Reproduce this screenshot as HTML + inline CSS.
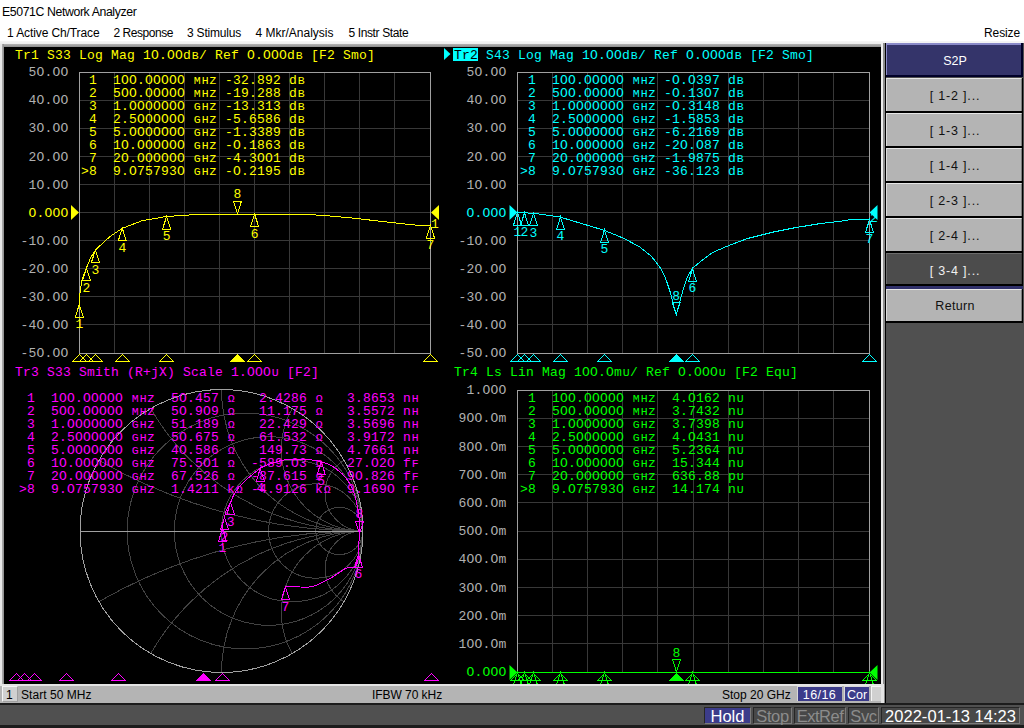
<!DOCTYPE html>
<html><head><meta charset="utf-8">
<style>
*{margin:0;padding:0;box-sizing:border-box}
html,body{width:1024px;height:728px;overflow:hidden;background:#fff;font-family:"Liberation Sans", sans-serif}
.abs{position:absolute}
.t{position:absolute;white-space:pre;line-height:1}
.sk{position:absolute;left:886px;width:136px;height:34px;background:#b4b4b4;border-top:1px solid #e8e8e8;border-left:1px solid #e0e0e0;border-bottom:2px solid #000;border-right:1px solid #404040;font-size:12px;color:#101010;text-align:center;line-height:31px}
</style></head><body>
<div class="t" style="left:2px;top:6px;font-size:12.3px;letter-spacing:-0.4px;color:#000">E5071C Network Analyzer</div>
<div class="t" style="left:7px;top:27px;font-size:12px;letter-spacing:-0.1px;color:#000">1 Active Ch/Trace</div>
<div class="t" style="left:113.5px;top:27px;font-size:12px;letter-spacing:-0.45px;color:#000">2 Response</div>
<div class="t" style="left:187px;top:27px;font-size:12px;letter-spacing:-0.2px;color:#000">3 Stimulus</div>
<div class="t" style="left:255.5px;top:27px;font-size:12px;letter-spacing:0px;color:#000">4 Mkr/Analysis</div>
<div class="t" style="left:348.5px;top:27px;font-size:12px;letter-spacing:-0.38px;color:#000">5 Instr State</div>
<div class="t" style="left:984px;top:27px;font-size:12px;letter-spacing:-0.1px;color:#000">Resize</div>
<!-- frame -->
<div class="abs" style="left:0;top:41px;width:886px;height:664px;background:#e8e8e8"></div>
<div class="abs" style="left:0;top:41px;width:886px;height:3px;background:linear-gradient(#f6f6f6,#ececec)"></div>
<div class="abs" style="left:2px;top:44px;width:879px;height:3px;background:linear-gradient(#b4b4b4,#8c8c8c)"></div>
<div class="abs" style="left:2px;top:44px;width:2px;height:640px;background:linear-gradient(90deg,#b0b0b0,#8c8c8c)"></div>
<div class="abs" style="left:881px;top:44px;width:2px;height:660px;background:#ececec"></div>
<div class="abs" style="left:883px;top:43px;width:2px;height:662px;background:#8c8c8c"></div>
<div class="abs" style="left:885px;top:43px;width:1px;height:662px;background:#000"></div>
<!-- softkeys panel -->
<div class="abs" style="left:886px;top:41px;width:138px;height:664px;background:#505050"></div>
<div class="abs" style="left:884px;top:41px;width:140px;height:2px;background:#f4f4f4"></div>
<div class="abs" style="left:886px;top:43px;width:137px;height:34px;background:#000028"></div>
<div class="abs" style="left:886px;top:43px;width:135px;height:32px;background:#34346a;border-top:2px solid #8a8ac8;border-left:1px solid #8a8ac8"></div>
<div class="t" style="left:887px;top:55px;width:136px;text-align:center;font-size:12.5px;color:#fff">S2P</div>
<div class="abs" style="left:886px;top:78px;width:137px;height:35px;background:#000"></div>
<div class="abs" style="left:886px;top:78px;width:136px;height:33px;background:#b4b4b4;border-top:1px solid #e6e6e6;border-left:1px solid #dcdcdc;border-right:1px solid #7c7c7c"></div>
<div class="t" style="left:887px;top:90px;width:136px;text-align:center;font-size:12.5px;letter-spacing:0.8px;color:#101010">[ 1-2 ]...</div>
<div class="abs" style="left:886px;top:113px;width:137px;height:35px;background:#000"></div>
<div class="abs" style="left:886px;top:113px;width:136px;height:33px;background:#b4b4b4;border-top:1px solid #e6e6e6;border-left:1px solid #dcdcdc;border-right:1px solid #7c7c7c"></div>
<div class="t" style="left:887px;top:125px;width:136px;text-align:center;font-size:12.5px;letter-spacing:0.8px;color:#101010">[ 1-3 ]...</div>
<div class="abs" style="left:886px;top:148px;width:137px;height:35px;background:#000"></div>
<div class="abs" style="left:886px;top:148px;width:136px;height:33px;background:#b4b4b4;border-top:1px solid #e6e6e6;border-left:1px solid #dcdcdc;border-right:1px solid #7c7c7c"></div>
<div class="t" style="left:887px;top:160px;width:136px;text-align:center;font-size:12.5px;letter-spacing:0.8px;color:#101010">[ 1-4 ]...</div>
<div class="abs" style="left:886px;top:183px;width:137px;height:35px;background:#000"></div>
<div class="abs" style="left:886px;top:183px;width:136px;height:33px;background:#b4b4b4;border-top:1px solid #e6e6e6;border-left:1px solid #dcdcdc;border-right:1px solid #7c7c7c"></div>
<div class="t" style="left:887px;top:195px;width:136px;text-align:center;font-size:12.5px;letter-spacing:0.8px;color:#101010">[ 2-3 ]...</div>
<div class="abs" style="left:886px;top:218px;width:137px;height:35px;background:#000"></div>
<div class="abs" style="left:886px;top:218px;width:136px;height:33px;background:#b4b4b4;border-top:1px solid #e6e6e6;border-left:1px solid #dcdcdc;border-right:1px solid #7c7c7c"></div>
<div class="t" style="left:887px;top:230px;width:136px;text-align:center;font-size:12.5px;letter-spacing:0.8px;color:#101010">[ 2-4 ]...</div>
<div class="abs" style="left:886px;top:253px;width:137px;height:37px;background:#000"></div>
<div class="abs" style="left:886px;top:253px;width:136px;height:31px;background:#4c4c4c;border-top:1px solid #6c6c6c;border-left:1px solid #6c6c6c;border-right:1px solid #3c3c3c"></div>
<div class="abs" style="left:886px;top:286px;width:137px;height:3px;background:#30306a"></div>
<div class="t" style="left:887px;top:265px;width:136px;text-align:center;font-size:12.5px;letter-spacing:0.8px;color:#f0f0f0">[ 3-4 ]...</div>
<div class="abs" style="left:886px;top:289px;width:137px;height:34px;background:#000"></div>
<div class="abs" style="left:886px;top:289px;width:136px;height:32px;background:#b4b4b4;border-top:1px solid #e6e6e6;border-left:1px solid #dcdcdc;border-right:1px solid #7c7c7c"></div>
<div class="t" style="left:887px;top:300px;width:136px;text-align:center;font-size:12.5px;letter-spacing:0.3px;color:#101010">Return</div>
<!-- display -->
<svg class="abs" style="left:0;top:0;white-space:pre" width="1024" height="728" viewBox="0 0 1024 728" font-family='"Liberation Mono", monospace'>
<rect x="4" y="47" width="877" height="637" fill="#000"/>
<text y="58.5" fill="#ffff00" font-size="13"><tspan x="15.00 23.00 31.00 39.00 47.00 55.00 63.00 71.00 79.00 87.00 95.00 103.00 111.00 119.00 127.00 135.00 143.00 151.00 159.00 167.00 175.00 183.00">Tr1 S33 Log Mag 1O.OOd</tspan><tspan x="191.70" font-size="11.5">B</tspan><tspan x="199.00 207.00 215.00 223.00 231.00 239.00 247.00 255.00 263.00 271.00 279.00 287.00">/ Ref O.OOOd</tspan><tspan x="295.70" font-size="11.5">B</tspan><tspan x="303.00 311.00 319.00 327.00 335.00 343.00 351.00 359.00 367.00"> [F2 Smo]</tspan></text>
<line x1="114.5" y1="72" x2="114.5" y2="353" stroke="#383838" stroke-width="1"/>
<line x1="149.5" y1="72" x2="149.5" y2="353" stroke="#383838" stroke-width="1"/>
<line x1="184.5" y1="72" x2="184.5" y2="353" stroke="#383838" stroke-width="1"/>
<line x1="219.5" y1="72" x2="219.5" y2="353" stroke="#383838" stroke-width="1"/>
<line x1="254.5" y1="72" x2="254.5" y2="353" stroke="#383838" stroke-width="1"/>
<line x1="289.5" y1="72" x2="289.5" y2="353" stroke="#383838" stroke-width="1"/>
<line x1="324.5" y1="72" x2="324.5" y2="353" stroke="#383838" stroke-width="1"/>
<line x1="359.5" y1="72" x2="359.5" y2="353" stroke="#383838" stroke-width="1"/>
<line x1="394.5" y1="72" x2="394.5" y2="353" stroke="#383838" stroke-width="1"/>
<line x1="79" y1="100.5" x2="430" y2="100.5" stroke="#383838" stroke-width="1"/>
<line x1="79" y1="128.5" x2="430" y2="128.5" stroke="#383838" stroke-width="1"/>
<line x1="79" y1="156.5" x2="430" y2="156.5" stroke="#383838" stroke-width="1"/>
<line x1="79" y1="184.5" x2="430" y2="184.5" stroke="#383838" stroke-width="1"/>
<line x1="79" y1="212.5" x2="430" y2="212.5" stroke="#383838" stroke-width="1"/>
<line x1="79" y1="240.5" x2="430" y2="240.5" stroke="#383838" stroke-width="1"/>
<line x1="79" y1="268.5" x2="430" y2="268.5" stroke="#383838" stroke-width="1"/>
<line x1="79" y1="296.5" x2="430" y2="296.5" stroke="#383838" stroke-width="1"/>
<line x1="79" y1="324.5" x2="430" y2="324.5" stroke="#383838" stroke-width="1"/>
<rect x="79.5" y="72.5" width="351" height="281" fill="none" stroke="#a0a0a0" stroke-width="1"/>
<text x="68.5" y="76.2" fill="#b0b0b0" font-size="13" letter-spacing="0.2" text-anchor="end">5O.OO</text>
<text x="68.5" y="104.3" fill="#b0b0b0" font-size="13" letter-spacing="0.2" text-anchor="end">4O.OO</text>
<text x="68.5" y="132.4" fill="#b0b0b0" font-size="13" letter-spacing="0.2" text-anchor="end">3O.OO</text>
<text x="68.5" y="160.5" fill="#b0b0b0" font-size="13" letter-spacing="0.2" text-anchor="end">2O.OO</text>
<text x="68.5" y="188.6" fill="#b0b0b0" font-size="13" letter-spacing="0.2" text-anchor="end">1O.OO</text>
<text x="68.5" y="216.7" fill="#ffff00" font-size="13" letter-spacing="0.2" text-anchor="end">O.OOO</text>
<text x="68.5" y="244.8" fill="#b0b0b0" font-size="13" letter-spacing="0.2" text-anchor="end">-1O.OO</text>
<text x="68.5" y="272.9" fill="#b0b0b0" font-size="13" letter-spacing="0.2" text-anchor="end">-2O.OO</text>
<text x="68.5" y="301.0" fill="#b0b0b0" font-size="13" letter-spacing="0.2" text-anchor="end">-3O.OO</text>
<text x="68.5" y="329.1" fill="#b0b0b0" font-size="13" letter-spacing="0.2" text-anchor="end">-4O.OO</text>
<text x="68.5" y="357.2" fill="#b0b0b0" font-size="13" letter-spacing="0.2" text-anchor="end">-5O.OO</text>
<text y="84" fill="#ffff00" font-size="13"><tspan x="81.00 89.00 97.00 105.00 113.00 121.00 129.00 137.00 145.00 153.00 161.00 169.00 177.00 185.00"> 1  1OO.OOOOO </tspan><tspan x="193.70 201.70" font-size="11.5">MH</tspan><tspan x="209.00 217.00 225.00 233.00 241.00 249.00 257.00 265.00 273.00 281.00 289.00">z -32.892 d</tspan><tspan x="297.70" font-size="11.5">B</tspan></text>
<text y="97" fill="#ffff00" font-size="13"><tspan x="81.00 89.00 97.00 105.00 113.00 121.00 129.00 137.00 145.00 153.00 161.00 169.00 177.00 185.00"> 2  5OO.OOOOO </tspan><tspan x="193.70 201.70" font-size="11.5">MH</tspan><tspan x="209.00 217.00 225.00 233.00 241.00 249.00 257.00 265.00 273.00 281.00 289.00">z -19.288 d</tspan><tspan x="297.70" font-size="11.5">B</tspan></text>
<text y="110" fill="#ffff00" font-size="13"><tspan x="81.00 89.00 97.00 105.00 113.00 121.00 129.00 137.00 145.00 153.00 161.00 169.00 177.00 185.00"> 3  1.OOOOOOO </tspan><tspan x="193.70 201.70" font-size="11.5">GH</tspan><tspan x="209.00 217.00 225.00 233.00 241.00 249.00 257.00 265.00 273.00 281.00 289.00">z -13.313 d</tspan><tspan x="297.70" font-size="11.5">B</tspan></text>
<text y="123" fill="#ffff00" font-size="13"><tspan x="81.00 89.00 97.00 105.00 113.00 121.00 129.00 137.00 145.00 153.00 161.00 169.00 177.00 185.00"> 4  2.5OOOOOO </tspan><tspan x="193.70 201.70" font-size="11.5">GH</tspan><tspan x="209.00 217.00 225.00 233.00 241.00 249.00 257.00 265.00 273.00 281.00 289.00">z -5.6586 d</tspan><tspan x="297.70" font-size="11.5">B</tspan></text>
<text y="136" fill="#ffff00" font-size="13"><tspan x="81.00 89.00 97.00 105.00 113.00 121.00 129.00 137.00 145.00 153.00 161.00 169.00 177.00 185.00"> 5  5.OOOOOOO </tspan><tspan x="193.70 201.70" font-size="11.5">GH</tspan><tspan x="209.00 217.00 225.00 233.00 241.00 249.00 257.00 265.00 273.00 281.00 289.00">z -1.3389 d</tspan><tspan x="297.70" font-size="11.5">B</tspan></text>
<text y="149" fill="#ffff00" font-size="13"><tspan x="81.00 89.00 97.00 105.00 113.00 121.00 129.00 137.00 145.00 153.00 161.00 169.00 177.00 185.00"> 6  1O.OOOOOO </tspan><tspan x="193.70 201.70" font-size="11.5">GH</tspan><tspan x="209.00 217.00 225.00 233.00 241.00 249.00 257.00 265.00 273.00 281.00 289.00">z -O.1863 d</tspan><tspan x="297.70" font-size="11.5">B</tspan></text>
<text y="162" fill="#ffff00" font-size="13"><tspan x="81.00 89.00 97.00 105.00 113.00 121.00 129.00 137.00 145.00 153.00 161.00 169.00 177.00 185.00"> 7  2O.OOOOOO </tspan><tspan x="193.70 201.70" font-size="11.5">GH</tspan><tspan x="209.00 217.00 225.00 233.00 241.00 249.00 257.00 265.00 273.00 281.00 289.00">z -4.3OO1 d</tspan><tspan x="297.70" font-size="11.5">B</tspan></text>
<text y="175" fill="#ffff00" font-size="13"><tspan x="81.00 89.00 97.00 105.00 113.00 121.00 129.00 137.00 145.00 153.00 161.00 169.00 177.00 185.00">&gt;8  9.O75793O </tspan><tspan x="193.70 201.70" font-size="11.5">GH</tspan><tspan x="209.00 217.00 225.00 233.00 241.00 249.00 257.00 265.00 273.00 281.00 289.00">z -O.2195 d</tspan><tspan x="297.70" font-size="11.5">B</tspan></text>
<polyline points="79.0,306.0 80.0,292.8 81.0,286.5 82.0,280.2 83.0,277.0 84.0,274.4 85.0,271.8 86.0,269.3 87.0,266.8 88.0,264.2 89.0,261.8 90.0,259.2 91.0,257.2 92.0,255.6 93.0,253.9 94.0,252.3 95.0,250.7 96.0,249.4 97.0,248.5 98.0,247.6 99.0,246.7 100.0,245.7 101.0,244.8 102.0,243.9 103.0,242.9 104.0,242.0 105.0,241.1 106.0,240.2 107.0,239.2 108.0,238.3 109.0,237.4 110.0,236.6 111.0,235.9 112.0,235.2 113.0,234.6 114.0,233.9 115.0,233.2 116.0,232.5 117.0,231.9 118.0,231.2 119.0,230.5 120.0,229.9 121.0,229.2 122.0,228.5 123.0,228.0 124.0,227.6 125.0,227.3 126.0,226.9 127.0,226.5 128.0,226.1 129.0,225.7 130.0,225.3 131.0,225.0 132.0,224.6 133.0,224.2 134.0,223.8 135.0,223.4 136.0,223.0 137.0,222.7 138.0,222.3 139.0,221.9 140.0,221.5 141.0,221.1 142.0,220.8 143.0,220.7 144.0,220.5 145.0,220.3 146.0,220.1 147.0,219.9 148.0,219.8 149.0,219.6 150.0,219.4 151.0,219.2 152.0,219.0 153.0,218.9 154.0,218.7 155.0,218.5 156.0,218.3 157.0,218.2 158.0,218.0 159.0,217.8 160.0,217.6 161.0,217.4 162.0,217.3 163.0,217.1 164.0,216.9 165.0,216.7 166.0,216.6 167.0,216.5 168.0,216.4 169.0,216.3 170.0,216.3 171.0,216.2 172.0,216.1 173.0,216.1 174.0,216.0 175.0,215.9 176.0,215.9 177.0,215.8 178.0,215.7 179.0,215.7 180.0,215.6 181.0,215.5 182.0,215.5 183.0,215.4 184.0,215.3 185.0,215.3 186.0,215.2 187.0,215.1 188.0,215.1 189.0,215.0 190.0,214.9 191.0,214.9 192.0,214.8 193.0,214.7 194.0,214.7 195.0,214.7 196.0,214.7 197.0,214.6 198.0,214.6 199.0,214.6 200.0,214.6 201.0,214.6 202.0,214.5 203.0,214.5 204.0,214.5 205.0,214.5 206.0,214.5 207.0,214.5 208.0,214.4 209.0,214.4 210.0,214.4 211.0,214.4 212.0,214.4 213.0,214.4 214.0,214.3 215.0,214.3 216.0,214.3 217.0,214.3 218.0,214.3 219.0,214.2 220.0,214.2 221.0,214.2 222.0,214.2 223.0,214.2 224.0,214.2 225.0,214.1 226.0,214.1 227.0,214.1 228.0,214.1 229.0,214.1 230.0,214.1 231.0,214.0 232.0,214.0 233.0,214.0 234.0,214.0 235.0,214.0 236.0,214.0 237.0,214.0 238.0,214.0 239.0,214.0 240.0,214.0 241.0,214.0 242.0,214.0 243.0,214.0 244.0,214.0 245.0,214.0 246.0,214.1 247.0,214.1 248.0,214.1 249.0,214.1 250.0,214.1 251.0,214.1 252.0,214.1 253.0,214.1 254.0,214.1 255.0,214.1 256.0,214.1 257.0,214.1 258.0,214.1 259.0,214.1 260.0,214.1 261.0,214.1 262.0,214.1 263.0,214.1 264.0,214.1 265.0,214.1 266.0,214.1 267.0,214.1 268.0,214.1 269.0,214.1 270.0,214.2 271.0,214.2 272.0,214.2 273.0,214.2 274.0,214.2 275.0,214.2 276.0,214.2 277.0,214.2 278.0,214.2 279.0,214.2 280.0,214.2 281.0,214.2 282.0,214.2 283.0,214.2 284.0,214.2 285.0,214.2 286.0,214.2 287.0,214.2 288.0,214.2 289.0,214.2 290.0,214.2 291.0,214.2 292.0,214.2 293.0,214.2 294.0,214.3 295.0,214.3 296.0,214.3 297.0,214.3 298.0,214.3 299.0,214.3 300.0,214.3 301.0,214.3 302.0,214.3 303.0,214.3 304.0,214.3 305.0,214.3 306.0,214.3 307.0,214.4 308.0,214.4 309.0,214.5 310.0,214.6 311.0,214.6 312.0,214.7 313.0,214.8 314.0,214.8 315.0,214.9 316.0,215.0 317.0,215.0 318.0,215.1 319.0,215.2 320.0,215.2 321.0,215.3 322.0,215.3 323.0,215.4 324.0,215.5 325.0,215.5 326.0,215.6 327.0,215.7 328.0,215.8 329.0,215.9 330.0,216.0 331.0,216.1 332.0,216.2 333.0,216.2 334.0,216.3 335.0,216.4 336.0,216.5 337.0,216.6 338.0,216.7 339.0,216.8 340.0,216.9 341.0,217.0 342.0,217.1 343.0,217.2 344.0,217.3 345.0,217.4 346.0,217.4 347.0,217.5 348.0,217.6 349.0,217.7 350.0,217.8 351.0,217.9 352.0,218.0 353.0,218.1 354.0,218.2 355.0,218.3 356.0,218.5 357.0,218.6 358.0,218.7 359.0,218.8 360.0,218.9 361.0,219.0 362.0,219.1 363.0,219.3 364.0,219.4 365.0,219.5 366.0,219.6 367.0,219.7 368.0,219.8 369.0,219.9 370.0,220.1 371.0,220.2 372.0,220.3 373.0,220.4 374.0,220.5 375.0,220.6 376.0,220.8 377.0,220.9 378.0,221.0 379.0,221.1 380.0,221.2 381.0,221.3 382.0,221.4 383.0,221.5 384.0,221.7 385.0,221.8 386.0,221.9 387.0,222.0 388.0,222.1 389.0,222.2 390.0,222.3 391.0,222.4 392.0,222.6 393.0,222.7 394.0,222.8 395.0,222.9 396.0,223.0 397.0,223.1 398.0,223.2 399.0,223.3 400.0,223.4 401.0,223.6 402.0,223.7 403.0,223.8 404.0,223.9 405.0,224.0 406.0,224.1 407.0,224.2 408.0,224.3 409.0,224.5 410.0,224.6 411.0,224.7 412.0,224.8 413.0,224.9 414.0,224.9 415.0,225.0 416.0,225.0 417.0,225.0 418.0,225.1 419.0,225.1 420.0,225.1 421.0,225.2 422.0,225.2 423.0,225.3 424.0,225.3 425.0,225.3 426.0,225.4 427.0,225.4 428.0,225.4 429.0,225.5 430.0,225.5" fill="none" stroke="#ffff00" stroke-width="1" shape-rendering="crispEdges"/>
<path d="M79.3,304.5 L75.3,317.0 L83.3,317.0 Z" fill="none" stroke="#ffff00" stroke-width="1" shape-rendering="crispEdges"/>
<text x="79.3" y="328.0" fill="#ffff00" font-size="13" letter-spacing="0" text-anchor="middle">1</text>
<path d="M86.5,268.0 L82.5,280.5 L90.5,280.5 Z" fill="none" stroke="#ffff00" stroke-width="1" shape-rendering="crispEdges"/>
<text x="86.5" y="291.5" fill="#ffff00" font-size="13" letter-spacing="0" text-anchor="middle">2</text>
<path d="M95.4,250.0 L91.4,262.5 L99.4,262.5 Z" fill="none" stroke="#ffff00" stroke-width="1" shape-rendering="crispEdges"/>
<text x="95.4" y="273.5" fill="#ffff00" font-size="13" letter-spacing="0" text-anchor="middle">3</text>
<path d="M122.3,228.3 L118.3,240.8 L126.3,240.8 Z" fill="none" stroke="#ffff00" stroke-width="1" shape-rendering="crispEdges"/>
<text x="122.3" y="251.8" fill="#ffff00" font-size="13" letter-spacing="0" text-anchor="middle">4</text>
<path d="M166.6,216.5 L162.6,229.0 L170.6,229.0 Z" fill="none" stroke="#ffff00" stroke-width="1" shape-rendering="crispEdges"/>
<text x="166.6" y="240.0" fill="#ffff00" font-size="13" letter-spacing="0" text-anchor="middle">5</text>
<path d="M254.6,214.0 L250.6,226.5 L258.6,226.5 Z" fill="none" stroke="#ffff00" stroke-width="1" shape-rendering="crispEdges"/>
<text x="254.6" y="237.5" fill="#ffff00" font-size="13" letter-spacing="0" text-anchor="middle">6</text>
<path d="M430.5,225.5 L426.5,238.0 L434.5,238.0 Z" fill="none" stroke="#ffff00" stroke-width="1" shape-rendering="crispEdges"/>
<text x="430.5" y="249.0" fill="#ffff00" font-size="13" letter-spacing="0" text-anchor="middle">7</text>
<path d="M237.5,213.5 L233.5,201.0 L241.5,201.0 Z" fill="none" stroke="#ffff00" stroke-width="1" shape-rendering="crispEdges"/>
<text x="237.5" y="198.0" fill="#ffff00" font-size="13" letter-spacing="0" text-anchor="middle">8</text>
<path d="M71,205.0 L79,212.5 L71,220.0 Z" fill="#ffff00"/>
<path d="M439,205.0 L431,212.5 L439,220.0 Z" fill="#ffff00"/>
<path d="M79.5,354.5 L72.5,361.5 L86.5,361.5 Z" fill="none" stroke="#ffff00" stroke-width="1" shape-rendering="crispEdges"/>
<path d="M86.5,354.5 L79.5,361.5 L93.5,361.5 Z" fill="none" stroke="#ffff00" stroke-width="1" shape-rendering="crispEdges"/>
<path d="M95.5,354.5 L88.5,361.5 L102.5,361.5 Z" fill="none" stroke="#ffff00" stroke-width="1" shape-rendering="crispEdges"/>
<path d="M122.5,354.5 L115.5,361.5 L129.5,361.5 Z" fill="none" stroke="#ffff00" stroke-width="1" shape-rendering="crispEdges"/>
<path d="M166.5,354.5 L159.5,361.5 L173.5,361.5 Z" fill="none" stroke="#ffff00" stroke-width="1" shape-rendering="crispEdges"/>
<path d="M254.5,354.5 L247.5,361.5 L261.5,361.5 Z" fill="none" stroke="#ffff00" stroke-width="1" shape-rendering="crispEdges"/>
<path d="M430.5,354.5 L423.5,361.5 L437.5,361.5 Z" fill="none" stroke="#ffff00" stroke-width="1" shape-rendering="crispEdges"/>
<path d="M237.5,354.5 L230.5,361.5 L244.5,361.5 Z" fill="#ffff00" stroke="#ffff00" stroke-width="1" shape-rendering="crispEdges"/>
<text x="435" y="228" fill="#ffff00" font-size="13" letter-spacing="0" text-anchor="middle">1</text>
<path d="M444,48 L450.5,54 L444,60 Z" fill="#00ffff"/>
<rect x="453" y="48" width="25" height="13" fill="#00ffff"/>
<text y="58.5" fill="#000000" font-size="13"><tspan x="454.00 462.00 470.00">Tr2</tspan></text>
<text y="58.5" fill="#00ffff" font-size="13"><tspan x="486.00 494.00 502.00 510.00 518.00 526.00 534.00 542.00 550.00 558.00 566.00 574.00 582.00 590.00 598.00 606.00 614.00 622.00">S43 Log Mag 1O.OOd</tspan><tspan x="630.70" font-size="11.5">B</tspan><tspan x="638.00 646.00 654.00 662.00 670.00 678.00 686.00 694.00 702.00 710.00 718.00 726.00">/ Ref O.OOOd</tspan><tspan x="734.70" font-size="11.5">B</tspan><tspan x="742.00 750.00 758.00 766.00 774.00 782.00 790.00 798.00 806.00"> [F2 Smo]</tspan></text>
<line x1="552.5" y1="72" x2="552.5" y2="353" stroke="#383838" stroke-width="1"/>
<line x1="587.5" y1="72" x2="587.5" y2="353" stroke="#383838" stroke-width="1"/>
<line x1="622.5" y1="72" x2="622.5" y2="353" stroke="#383838" stroke-width="1"/>
<line x1="657.5" y1="72" x2="657.5" y2="353" stroke="#383838" stroke-width="1"/>
<line x1="693.5" y1="72" x2="693.5" y2="353" stroke="#383838" stroke-width="1"/>
<line x1="728.5" y1="72" x2="728.5" y2="353" stroke="#383838" stroke-width="1"/>
<line x1="763.5" y1="72" x2="763.5" y2="353" stroke="#383838" stroke-width="1"/>
<line x1="798.5" y1="72" x2="798.5" y2="353" stroke="#383838" stroke-width="1"/>
<line x1="833.5" y1="72" x2="833.5" y2="353" stroke="#383838" stroke-width="1"/>
<line x1="517" y1="100.5" x2="869" y2="100.5" stroke="#383838" stroke-width="1"/>
<line x1="517" y1="128.5" x2="869" y2="128.5" stroke="#383838" stroke-width="1"/>
<line x1="517" y1="156.5" x2="869" y2="156.5" stroke="#383838" stroke-width="1"/>
<line x1="517" y1="184.5" x2="869" y2="184.5" stroke="#383838" stroke-width="1"/>
<line x1="517" y1="212.5" x2="869" y2="212.5" stroke="#383838" stroke-width="1"/>
<line x1="517" y1="240.5" x2="869" y2="240.5" stroke="#383838" stroke-width="1"/>
<line x1="517" y1="268.5" x2="869" y2="268.5" stroke="#383838" stroke-width="1"/>
<line x1="517" y1="296.5" x2="869" y2="296.5" stroke="#383838" stroke-width="1"/>
<line x1="517" y1="324.5" x2="869" y2="324.5" stroke="#383838" stroke-width="1"/>
<rect x="517.5" y="72.5" width="352" height="281" fill="none" stroke="#a0a0a0" stroke-width="1"/>
<text x="506.5" y="76.2" fill="#b0b0b0" font-size="13" letter-spacing="0.2" text-anchor="end">5O.OO</text>
<text x="506.5" y="104.3" fill="#b0b0b0" font-size="13" letter-spacing="0.2" text-anchor="end">4O.OO</text>
<text x="506.5" y="132.4" fill="#b0b0b0" font-size="13" letter-spacing="0.2" text-anchor="end">3O.OO</text>
<text x="506.5" y="160.5" fill="#b0b0b0" font-size="13" letter-spacing="0.2" text-anchor="end">2O.OO</text>
<text x="506.5" y="188.6" fill="#b0b0b0" font-size="13" letter-spacing="0.2" text-anchor="end">1O.OO</text>
<text x="506.5" y="216.7" fill="#00ffff" font-size="13" letter-spacing="0.2" text-anchor="end">O.OOO</text>
<text x="506.5" y="244.8" fill="#b0b0b0" font-size="13" letter-spacing="0.2" text-anchor="end">-1O.OO</text>
<text x="506.5" y="272.9" fill="#b0b0b0" font-size="13" letter-spacing="0.2" text-anchor="end">-2O.OO</text>
<text x="506.5" y="301.0" fill="#b0b0b0" font-size="13" letter-spacing="0.2" text-anchor="end">-3O.OO</text>
<text x="506.5" y="329.1" fill="#b0b0b0" font-size="13" letter-spacing="0.2" text-anchor="end">-4O.OO</text>
<text x="506.5" y="357.2" fill="#b0b0b0" font-size="13" letter-spacing="0.2" text-anchor="end">-5O.OO</text>
<text y="84" fill="#00ffff" font-size="13"><tspan x="520.00 528.00 536.00 544.00 552.00 560.00 568.00 576.00 584.00 592.00 600.00 608.00 616.00 624.00"> 1  1OO.OOOOO </tspan><tspan x="632.70 640.70" font-size="11.5">MH</tspan><tspan x="648.00 656.00 664.00 672.00 680.00 688.00 696.00 704.00 712.00 720.00 728.00">z -O.O397 d</tspan><tspan x="736.70" font-size="11.5">B</tspan></text>
<text y="97" fill="#00ffff" font-size="13"><tspan x="520.00 528.00 536.00 544.00 552.00 560.00 568.00 576.00 584.00 592.00 600.00 608.00 616.00 624.00"> 2  5OO.OOOOO </tspan><tspan x="632.70 640.70" font-size="11.5">MH</tspan><tspan x="648.00 656.00 664.00 672.00 680.00 688.00 696.00 704.00 712.00 720.00 728.00">z -O.13O7 d</tspan><tspan x="736.70" font-size="11.5">B</tspan></text>
<text y="110" fill="#00ffff" font-size="13"><tspan x="520.00 528.00 536.00 544.00 552.00 560.00 568.00 576.00 584.00 592.00 600.00 608.00 616.00 624.00"> 3  1.OOOOOOO </tspan><tspan x="632.70 640.70" font-size="11.5">GH</tspan><tspan x="648.00 656.00 664.00 672.00 680.00 688.00 696.00 704.00 712.00 720.00 728.00">z -O.3148 d</tspan><tspan x="736.70" font-size="11.5">B</tspan></text>
<text y="123" fill="#00ffff" font-size="13"><tspan x="520.00 528.00 536.00 544.00 552.00 560.00 568.00 576.00 584.00 592.00 600.00 608.00 616.00 624.00"> 4  2.5OOOOOO </tspan><tspan x="632.70 640.70" font-size="11.5">GH</tspan><tspan x="648.00 656.00 664.00 672.00 680.00 688.00 696.00 704.00 712.00 720.00 728.00">z -1.5853 d</tspan><tspan x="736.70" font-size="11.5">B</tspan></text>
<text y="136" fill="#00ffff" font-size="13"><tspan x="520.00 528.00 536.00 544.00 552.00 560.00 568.00 576.00 584.00 592.00 600.00 608.00 616.00 624.00"> 5  5.OOOOOOO </tspan><tspan x="632.70 640.70" font-size="11.5">GH</tspan><tspan x="648.00 656.00 664.00 672.00 680.00 688.00 696.00 704.00 712.00 720.00 728.00">z -6.2169 d</tspan><tspan x="736.70" font-size="11.5">B</tspan></text>
<text y="149" fill="#00ffff" font-size="13"><tspan x="520.00 528.00 536.00 544.00 552.00 560.00 568.00 576.00 584.00 592.00 600.00 608.00 616.00 624.00"> 6  1O.OOOOOO </tspan><tspan x="632.70 640.70" font-size="11.5">GH</tspan><tspan x="648.00 656.00 664.00 672.00 680.00 688.00 696.00 704.00 712.00 720.00 728.00">z -2O.O87 d</tspan><tspan x="736.70" font-size="11.5">B</tspan></text>
<text y="162" fill="#00ffff" font-size="13"><tspan x="520.00 528.00 536.00 544.00 552.00 560.00 568.00 576.00 584.00 592.00 600.00 608.00 616.00 624.00"> 7  2O.OOOOOO </tspan><tspan x="632.70 640.70" font-size="11.5">GH</tspan><tspan x="648.00 656.00 664.00 672.00 680.00 688.00 696.00 704.00 712.00 720.00 728.00">z -1.9875 d</tspan><tspan x="736.70" font-size="11.5">B</tspan></text>
<text y="175" fill="#00ffff" font-size="13"><tspan x="520.00 528.00 536.00 544.00 552.00 560.00 568.00 576.00 584.00 592.00 600.00 608.00 616.00 624.00">&gt;8  9.O75793O </tspan><tspan x="632.70 640.70" font-size="11.5">GH</tspan><tspan x="648.00 656.00 664.00 672.00 680.00 688.00 696.00 704.00 712.00 720.00 728.00">z -36.123 d</tspan><tspan x="736.70" font-size="11.5">B</tspan></text>
<polyline points="517.5,212.3 518.5,212.4 519.5,212.4 520.5,212.5 521.5,212.6 522.5,212.6 523.5,212.7 524.5,212.8 525.5,212.8 526.5,212.9 527.5,213.0 528.5,213.1 529.5,213.1 530.5,213.2 531.5,213.3 532.5,213.3 533.5,213.4 534.5,213.5 535.5,213.6 536.5,213.7 537.5,213.8 538.5,214.0 539.5,214.1 540.5,214.3 541.5,214.4 542.5,214.6 543.5,214.7 544.5,214.8 545.5,215.0 546.5,215.1 547.5,215.2 548.5,215.4 549.5,215.5 550.5,215.7 551.5,215.8 552.5,215.9 553.5,216.1 554.5,216.2 555.5,216.4 556.5,216.5 557.5,216.7 558.5,216.8 559.5,216.9 560.5,217.2 561.5,217.5 562.5,217.8 563.5,218.1 564.5,218.4 565.5,218.7 566.5,219.0 567.5,219.3 568.5,219.6 569.5,219.9 570.5,220.2 571.5,220.5 572.5,220.8 573.5,221.1 574.5,221.4 575.5,221.7 576.5,222.0 577.5,222.3 578.5,222.6 579.5,222.9 580.5,223.2 581.5,223.5 582.5,223.8 583.5,224.1 584.5,224.4 585.5,224.7 586.5,225.0 587.5,225.3 588.5,225.6 589.5,225.9 590.5,226.2 591.5,226.5 592.5,226.8 593.5,227.1 594.5,227.4 595.5,227.7 596.5,228.0 597.5,228.3 598.5,228.6 599.5,228.9 600.5,229.2 601.5,229.5 602.5,229.8 603.5,230.1 604.5,230.5 605.5,230.9 606.5,231.3 607.5,231.7 608.5,232.1 609.5,232.5 610.5,232.9 611.5,233.3 612.5,233.7 613.5,234.1 614.5,234.5 615.5,234.9 616.5,235.3 617.5,235.7 618.5,236.1 619.5,236.6 620.5,237.0 621.5,237.4 622.5,237.8 623.5,238.3 624.5,238.8 625.5,239.3 626.5,239.9 627.5,240.4 628.5,240.9 629.5,241.5 630.5,242.0 631.5,242.5 632.5,243.0 633.5,243.6 634.5,244.1 635.5,244.6 636.5,245.2 637.5,245.7 638.5,246.2 639.5,246.8 640.5,247.6 641.5,248.4 642.5,249.2 643.5,250.0 644.5,250.8 645.5,251.6 646.5,252.4 647.5,253.2 648.5,254.0 649.5,254.8 650.5,255.6 651.5,256.4 652.5,257.7 653.5,259.0 654.5,260.2 655.5,261.5 656.5,262.8 657.5,264.1 658.5,265.3 659.5,266.6 660.5,268.3 661.5,270.3 662.5,272.3 663.5,274.3 664.5,276.3 665.5,278.3 666.5,280.9 667.5,283.9 668.5,287.0 669.5,290.0 670.5,293.0 671.5,296.7 672.5,300.7 673.5,304.6 674.5,308.5 675.5,312.5 676.5,314.1 677.5,310.4 678.5,306.7 679.5,303.0 680.5,299.3 681.5,295.6 682.5,291.9 683.5,288.8 684.5,285.8 685.5,282.7 686.5,279.7 687.5,276.7 688.5,275.0 689.5,273.3 690.5,271.6 691.5,269.9 692.5,268.4 693.5,267.6 694.5,266.7 695.5,265.8 696.5,264.9 697.5,264.1 698.5,263.2 699.5,262.3 700.5,261.5 701.5,260.8 702.5,260.0 703.5,259.2 704.5,258.5 705.5,257.7 706.5,256.9 707.5,256.2 708.5,255.4 709.5,254.6 710.5,253.9 711.5,253.1 712.5,252.5 713.5,252.1 714.5,251.6 715.5,251.2 716.5,250.8 717.5,250.4 718.5,249.9 719.5,249.5 720.5,249.1 721.5,248.7 722.5,248.2 723.5,247.8 724.5,247.4 725.5,246.9 726.5,246.5 727.5,246.1 728.5,245.7 729.5,245.3 730.5,244.9 731.5,244.5 732.5,244.2 733.5,243.8 734.5,243.4 735.5,243.0 736.5,242.7 737.5,242.3 738.5,241.9 739.5,241.5 740.5,241.2 741.5,240.8 742.5,240.4 743.5,240.0 744.5,239.7 745.5,239.3 746.5,238.9 747.5,238.5 748.5,238.2 749.5,238.0 750.5,237.7 751.5,237.5 752.5,237.2 753.5,237.0 754.5,236.7 755.5,236.5 756.5,236.2 757.5,236.0 758.5,235.7 759.5,235.5 760.5,235.2 761.5,235.0 762.5,234.7 763.5,234.5 764.5,234.2 765.5,234.0 766.5,233.7 767.5,233.5 768.5,233.2 769.5,233.0 770.5,232.7 771.5,232.5 772.5,232.2 773.5,232.0 774.5,231.8 775.5,231.6 776.5,231.4 777.5,231.2 778.5,231.0 779.5,230.8 780.5,230.6 781.5,230.4 782.5,230.2 783.5,230.0 784.5,229.8 785.5,229.6 786.5,229.4 787.5,229.2 788.5,229.0 789.5,228.8 790.5,228.6 791.5,228.4 792.5,228.2 793.5,228.0 794.5,227.8 795.5,227.6 796.5,227.5 797.5,227.3 798.5,227.1 799.5,227.0 800.5,226.8 801.5,226.6 802.5,226.5 803.5,226.3 804.5,226.2 805.5,226.0 806.5,225.8 807.5,225.7 808.5,225.5 809.5,225.3 810.5,225.2 811.5,225.0 812.5,224.9 813.5,224.7 814.5,224.5 815.5,224.4 816.5,224.2 817.5,224.0 818.5,223.9 819.5,223.7 820.5,223.6 821.5,223.4 822.5,223.3 823.5,223.2 824.5,223.1 825.5,223.0 826.5,222.9 827.5,222.8 828.5,222.6 829.5,222.5 830.5,222.4 831.5,222.3 832.5,222.2 833.5,222.1 834.5,221.9 835.5,221.8 836.5,221.7 837.5,221.6 838.5,221.5 839.5,221.4 840.5,221.2 841.5,221.1 842.5,221.0 843.5,220.9 844.5,220.8 845.5,220.7 846.5,220.5 847.5,220.2 848.5,219.9 849.5,219.8 850.5,219.8 851.5,219.8 852.5,219.8 853.5,219.8 854.5,219.8 855.5,219.8 856.5,219.8 857.5,219.8 858.5,219.8 859.5,219.8 860.5,219.8 861.5,219.8 862.5,219.8 863.5,219.8 864.5,219.8 865.5,219.8 866.5,219.8 867.5,219.8 868.5,219.8 869.5,219.8" fill="none" stroke="#00ffff" stroke-width="1" shape-rendering="crispEdges"/>
<path d="M517.5,212.6 L513.5,225.1 L521.5,225.1 Z" fill="none" stroke="#00ffff" stroke-width="1" shape-rendering="crispEdges"/>
<text x="517.5" y="236.111557" fill="#00ffff" font-size="13" letter-spacing="0" text-anchor="middle">1</text>
<path d="M524.5,212.9 L520.5,225.4 L528.5,225.4 Z" fill="none" stroke="#00ffff" stroke-width="1" shape-rendering="crispEdges"/>
<text x="524.5" y="236.367267" fill="#00ffff" font-size="13" letter-spacing="0" text-anchor="middle">2</text>
<path d="M533.5,213.4 L529.5,225.9 L537.5,225.9 Z" fill="none" stroke="#00ffff" stroke-width="1" shape-rendering="crispEdges"/>
<text x="533.5" y="236.884588" fill="#00ffff" font-size="13" letter-spacing="0" text-anchor="middle">3</text>
<path d="M560.5,217.0 L556.5,229.5 L564.5,229.5 Z" fill="none" stroke="#00ffff" stroke-width="1" shape-rendering="crispEdges"/>
<text x="560.5" y="240.454693" fill="#00ffff" font-size="13" letter-spacing="0" text-anchor="middle">4</text>
<path d="M604.5,230.0 L600.5,242.5 L608.5,242.5 Z" fill="none" stroke="#00ffff" stroke-width="1" shape-rendering="crispEdges"/>
<text x="604.5" y="253.469489" fill="#00ffff" font-size="13" letter-spacing="0" text-anchor="middle">5</text>
<path d="M692.5,268.9 L688.5,281.4 L696.5,281.4 Z" fill="none" stroke="#00ffff" stroke-width="1" shape-rendering="crispEdges"/>
<text x="692.5" y="292.44447" fill="#00ffff" font-size="13" letter-spacing="0" text-anchor="middle">6</text>
<path d="M869.5,219.8 L865.5,232.3 L873.5,232.3 Z" fill="none" stroke="#00ffff" stroke-width="1" shape-rendering="crispEdges"/>
<text x="869.5" y="243.3" fill="#00ffff" font-size="13" letter-spacing="0" text-anchor="middle">7</text>
<path d="M676.2,315.0 L672.2,302.5 L680.2,302.5 Z" fill="none" stroke="#00ffff" stroke-width="1" shape-rendering="crispEdges"/>
<text x="676.2" y="299.5" fill="#00ffff" font-size="13" letter-spacing="0" text-anchor="middle">8</text>
<text x="874" y="222" fill="#00ffff" font-size="13" letter-spacing="0" text-anchor="middle">2</text>
<path d="M509.5,205.0 L517.5,212.5 L509.5,220.0 Z" fill="#00ffff"/>
<path d="M877.5,205.0 L869.5,212.5 L877.5,220.0 Z" fill="#00ffff"/>
<path d="M517.5,354.5 L510.5,361.5 L524.5,361.5 Z" fill="none" stroke="#00ffff" stroke-width="1" shape-rendering="crispEdges"/>
<path d="M524.5,354.5 L517.5,361.5 L531.5,361.5 Z" fill="none" stroke="#00ffff" stroke-width="1" shape-rendering="crispEdges"/>
<path d="M533.5,354.5 L526.5,361.5 L540.5,361.5 Z" fill="none" stroke="#00ffff" stroke-width="1" shape-rendering="crispEdges"/>
<path d="M560.5,354.5 L553.5,361.5 L567.5,361.5 Z" fill="none" stroke="#00ffff" stroke-width="1" shape-rendering="crispEdges"/>
<path d="M604.5,354.5 L597.5,361.5 L611.5,361.5 Z" fill="none" stroke="#00ffff" stroke-width="1" shape-rendering="crispEdges"/>
<path d="M692.5,354.5 L685.5,361.5 L699.5,361.5 Z" fill="none" stroke="#00ffff" stroke-width="1" shape-rendering="crispEdges"/>
<path d="M869.5,354.5 L862.5,361.5 L876.5,361.5 Z" fill="none" stroke="#00ffff" stroke-width="1" shape-rendering="crispEdges"/>
<path d="M676.5,354.5 L669.5,361.5 L683.5,361.5 Z" fill="#00ffff" stroke="#00ffff" stroke-width="1" shape-rendering="crispEdges"/>
<text y="376" fill="#ff00ff" font-size="13"><tspan x="15.00 23.00 31.00 39.00 47.00 55.00 63.00 71.00 79.00 87.00 95.00 103.00 111.00 119.00 127.00 135.00 143.00 151.00 159.00 167.00 175.00 183.00 191.00 199.00 207.00 215.00 223.00 231.00 239.00 247.00 255.00 263.00">Tr3 S33 Smith (R+jX) Scale 1.OOO</tspan><tspan x="271.70" font-size="11.5">U</tspan><tspan x="279.00 287.00 295.00 303.00 311.00"> [F2]</tspan></text>
<defs><clipPath id="smc"><circle cx="221.5" cy="531" r="141.5"/></clipPath></defs>
<g clip-path="url(#smc)" fill="none" stroke="#424242" stroke-width="1" shape-rendering="crispEdges"><circle cx="245.08" cy="531" r="117.92"/><circle cx="268.67" cy="531" r="94.33"/><circle cx="292.25" cy="531" r="70.75"/><circle cx="315.83" cy="531" r="47.17"/><circle cx="339.42" cy="531" r="23.58"/><circle cx="363.00" cy="2.91" r="528.09"/><circle cx="363.00" cy="1059.09" r="528.09"/><circle cx="363.00" cy="285.91" r="245.09"/><circle cx="363.00" cy="776.09" r="245.09"/><circle cx="363.00" cy="389.50" r="141.50"/><circle cx="363.00" cy="672.50" r="141.50"/><circle cx="363.00" cy="449.30" r="81.70"/><circle cx="363.00" cy="612.70" r="81.70"/><circle cx="363.00" cy="493.09" r="37.91"/><circle cx="363.00" cy="568.91" r="37.91"/></g>
<circle cx="221.5" cy="531" r="141.5" fill="none" stroke="#a0a0a0" stroke-width="1" shape-rendering="crispEdges"/>
<line x1="80.0" y1="531.5" x2="363.0" y2="531.5" stroke="#a0a0a0" stroke-width="1"/>
<polyline points="222.2,532.0 222.2,531.5 222.3,530.8 222.4,529.8 222.5,528.7 222.6,527.2 222.8,525.4 223.0,523.6 223.2,522.0 223.5,520.7 223.8,519.6 224.1,518.5 224.5,517.2 224.9,515.6 225.3,513.8 225.8,511.9 226.5,510.0 227.4,508.2 228.4,506.4 229.5,504.5 230.6,502.4 231.6,500.1 232.6,497.5 233.8,494.9 235.3,492.2 237.2,489.6 239.3,486.9 241.8,484.1 244.7,481.2 248.2,478.0 252.2,474.6 256.4,471.3 260.3,468.5 263.9,466.5 267.5,464.9 270.9,463.6 274.4,462.5 277.8,461.4 281.2,460.6 284.7,459.9 288.4,459.4 292.5,459.1 296.9,459.1 301.3,459.2 305.6,459.4 309.7,459.7 313.7,460.2 317.6,460.8 321.2,461.7 324.6,462.8 327.8,464.0 330.8,465.5 333.8,467.2 336.7,469.2 339.5,471.5 342.2,473.9 344.7,476.6 347.0,479.5 349.0,482.6 350.9,485.8 352.5,489.0 353.8,492.1 354.8,495.2 355.6,498.3 356.4,501.6 357.1,505.0 357.8,508.4 358.3,512.0 358.8,515.6 359.1,519.5 359.3,523.7 359.4,527.7 359.5,531.2 359.5,534.0 359.3,536.2 359.2,538.4 359.0,541.0 358.9,544.3 358.8,548.0 358.7,551.6 358.5,554.7 358.3,557.0 358.2,558.9 357.9,560.5 357.5,562.0 357.0,563.6 356.5,565.0 355.7,566.3 354.6,567.2 353.0,567.6 351.0,567.6 348.9,567.6 346.9,567.9 345.2,568.6 343.5,569.6 341.9,570.7 340.3,571.8 338.7,572.9 337.0,574.0 335.4,575.1 333.7,576.2 332.1,577.2 330.5,578.1 328.8,579.1 327.1,580.0 325.3,581.0 323.4,582.0 321.4,582.9 319.5,583.8 317.6,584.6 315.7,585.4 313.8,586.1 311.8,586.6 309.7,586.9 307.6,587.1 305.4,587.1 303.0,587.1 300.3,587.0 297.4,586.9 294.5,586.7 292.0,586.6 289.9,586.7 288.0,586.8 286.5,587.0 285.4,587.1" fill="none" stroke="#ff00ff" stroke-width="1" shape-rendering="crispEdges"/>
<path d="M222.5,528.7 L218.5,541.2 L226.5,541.2 Z" fill="none" stroke="#ff00ff" stroke-width="1" shape-rendering="crispEdges"/>
<text x="222.5" y="552.2" fill="#ff00ff" font-size="13" letter-spacing="0" text-anchor="middle">1</text>
<path d="M224.5,517.2 L220.5,529.7 L228.5,529.7 Z" fill="none" stroke="#ff00ff" stroke-width="1" shape-rendering="crispEdges"/>
<text x="224.5" y="540.7" fill="#ff00ff" font-size="13" letter-spacing="0" text-anchor="middle">2</text>
<path d="M230.6,502.4 L226.6,514.9 L234.6,514.9 Z" fill="none" stroke="#ff00ff" stroke-width="1" shape-rendering="crispEdges"/>
<text x="230.6" y="525.9" fill="#ff00ff" font-size="13" letter-spacing="0" text-anchor="middle">3</text>
<path d="M260.3,468.5 L256.3,481.0 L264.3,481.0 Z" fill="none" stroke="#ff00ff" stroke-width="1" shape-rendering="crispEdges"/>
<text x="260.3" y="492.0" fill="#ff00ff" font-size="13" letter-spacing="0" text-anchor="middle">4</text>
<path d="M321.2,461.7 L317.2,474.2 L325.2,474.2 Z" fill="none" stroke="#ff00ff" stroke-width="1" shape-rendering="crispEdges"/>
<text x="321.25" y="485.2" fill="#ff00ff" font-size="13" letter-spacing="0" text-anchor="middle">5</text>
<path d="M358.5,554.7 L354.5,567.2 L362.5,567.2 Z" fill="none" stroke="#ff00ff" stroke-width="1" shape-rendering="crispEdges"/>
<text x="358.5" y="578.2" fill="#ff00ff" font-size="13" letter-spacing="0" text-anchor="middle">6</text>
<path d="M285.4,587.1 L281.4,599.6 L289.4,599.6 Z" fill="none" stroke="#ff00ff" stroke-width="1" shape-rendering="crispEdges"/>
<text x="285.4" y="610.6" fill="#ff00ff" font-size="13" letter-spacing="0" text-anchor="middle">7</text>
<path d="M359.5,533.5 L355.5,521.0 L363.5,521.0 Z" fill="none" stroke="#ff00ff" stroke-width="1" shape-rendering="crispEdges"/>
<text x="359.5" y="518.0" fill="#ff00ff" font-size="13" letter-spacing="0" text-anchor="middle">8</text>
<text y="402" fill="#ff00ff" font-size="13"><tspan x="19.00 27.00 35.00 43.00 51.00 59.00 67.00 75.00 83.00 91.00 99.00 107.00 115.00 123.00"> 1  1OO.OOOOO </tspan><tspan x="131.70 139.70" font-size="11.5">MH</tspan><tspan x="147.00 155.00 163.00 171.00 179.00 187.00 195.00 203.00 211.00 219.00">z  5O.457 </tspan><tspan x="227.70" font-size="11.5">Ω</tspan><tspan x="235.00 243.00 251.00 259.00 267.00 275.00 283.00 291.00 299.00 307.00">   2.4286 </tspan><tspan x="315.70" font-size="11.5">Ω</tspan><tspan x="323.00 331.00 339.00 347.00 355.00 363.00 371.00 379.00 387.00 395.00 403.00">   3.8653 n</tspan><tspan x="411.70" font-size="11.5">H</tspan></text>
<text y="415" fill="#ff00ff" font-size="13"><tspan x="19.00 27.00 35.00 43.00 51.00 59.00 67.00 75.00 83.00 91.00 99.00 107.00 115.00 123.00"> 2  5OO.OOOOO </tspan><tspan x="131.70 139.70" font-size="11.5">MH</tspan><tspan x="147.00 155.00 163.00 171.00 179.00 187.00 195.00 203.00 211.00 219.00">z  5O.9O9 </tspan><tspan x="227.70" font-size="11.5">Ω</tspan><tspan x="235.00 243.00 251.00 259.00 267.00 275.00 283.00 291.00 299.00 307.00">   11.175 </tspan><tspan x="315.70" font-size="11.5">Ω</tspan><tspan x="323.00 331.00 339.00 347.00 355.00 363.00 371.00 379.00 387.00 395.00 403.00">   3.5572 n</tspan><tspan x="411.70" font-size="11.5">H</tspan></text>
<text y="428" fill="#ff00ff" font-size="13"><tspan x="19.00 27.00 35.00 43.00 51.00 59.00 67.00 75.00 83.00 91.00 99.00 107.00 115.00 123.00"> 3  1.OOOOOOO </tspan><tspan x="131.70 139.70" font-size="11.5">GH</tspan><tspan x="147.00 155.00 163.00 171.00 179.00 187.00 195.00 203.00 211.00 219.00">z  51.189 </tspan><tspan x="227.70" font-size="11.5">Ω</tspan><tspan x="235.00 243.00 251.00 259.00 267.00 275.00 283.00 291.00 299.00 307.00">   22.429 </tspan><tspan x="315.70" font-size="11.5">Ω</tspan><tspan x="323.00 331.00 339.00 347.00 355.00 363.00 371.00 379.00 387.00 395.00 403.00">   3.5696 n</tspan><tspan x="411.70" font-size="11.5">H</tspan></text>
<text y="441" fill="#ff00ff" font-size="13"><tspan x="19.00 27.00 35.00 43.00 51.00 59.00 67.00 75.00 83.00 91.00 99.00 107.00 115.00 123.00"> 4  2.5OOOOOO </tspan><tspan x="131.70 139.70" font-size="11.5">GH</tspan><tspan x="147.00 155.00 163.00 171.00 179.00 187.00 195.00 203.00 211.00 219.00">z  5O.675 </tspan><tspan x="227.70" font-size="11.5">Ω</tspan><tspan x="235.00 243.00 251.00 259.00 267.00 275.00 283.00 291.00 299.00 307.00">   61.532 </tspan><tspan x="315.70" font-size="11.5">Ω</tspan><tspan x="323.00 331.00 339.00 347.00 355.00 363.00 371.00 379.00 387.00 395.00 403.00">   3.9172 n</tspan><tspan x="411.70" font-size="11.5">H</tspan></text>
<text y="454" fill="#ff00ff" font-size="13"><tspan x="19.00 27.00 35.00 43.00 51.00 59.00 67.00 75.00 83.00 91.00 99.00 107.00 115.00 123.00"> 5  5.OOOOOOO </tspan><tspan x="131.70 139.70" font-size="11.5">GH</tspan><tspan x="147.00 155.00 163.00 171.00 179.00 187.00 195.00 203.00 211.00 219.00">z  4O.586 </tspan><tspan x="227.70" font-size="11.5">Ω</tspan><tspan x="235.00 243.00 251.00 259.00 267.00 275.00 283.00 291.00 299.00 307.00">   149.73 </tspan><tspan x="315.70" font-size="11.5">Ω</tspan><tspan x="323.00 331.00 339.00 347.00 355.00 363.00 371.00 379.00 387.00 395.00 403.00">   4.7661 n</tspan><tspan x="411.70" font-size="11.5">H</tspan></text>
<text y="467" fill="#ff00ff" font-size="13"><tspan x="19.00 27.00 35.00 43.00 51.00 59.00 67.00 75.00 83.00 91.00 99.00 107.00 115.00 123.00"> 6  1O.OOOOOO </tspan><tspan x="131.70 139.70" font-size="11.5">GH</tspan><tspan x="147.00 155.00 163.00 171.00 179.00 187.00 195.00 203.00 211.00 219.00">z  75.5O1 </tspan><tspan x="227.70" font-size="11.5">Ω</tspan><tspan x="235.00 243.00 251.00 259.00 267.00 275.00 283.00 291.00 299.00 307.00">  -589.O3 </tspan><tspan x="315.70" font-size="11.5">Ω</tspan><tspan x="323.00 331.00 339.00 347.00 355.00 363.00 371.00 379.00 387.00 395.00 403.00">   27.O2O f</tspan><tspan x="411.70" font-size="11.5">F</tspan></text>
<text y="480" fill="#ff00ff" font-size="13"><tspan x="19.00 27.00 35.00 43.00 51.00 59.00 67.00 75.00 83.00 91.00 99.00 107.00 115.00 123.00"> 7  2O.OOOOOO </tspan><tspan x="131.70 139.70" font-size="11.5">GH</tspan><tspan x="147.00 155.00 163.00 171.00 179.00 187.00 195.00 203.00 211.00 219.00">z  67.526 </tspan><tspan x="227.70" font-size="11.5">Ω</tspan><tspan x="235.00 243.00 251.00 259.00 267.00 275.00 283.00 291.00 299.00 307.00">  -87.615 </tspan><tspan x="315.70" font-size="11.5">Ω</tspan><tspan x="323.00 331.00 339.00 347.00 355.00 363.00 371.00 379.00 387.00 395.00 403.00">   9O.826 f</tspan><tspan x="411.70" font-size="11.5">F</tspan></text>
<text y="493" fill="#ff00ff" font-size="13"><tspan x="19.00 27.00 35.00 43.00 51.00 59.00 67.00 75.00 83.00 91.00 99.00 107.00 115.00 123.00">&gt;8  9.O75793O </tspan><tspan x="131.70 139.70" font-size="11.5">GH</tspan><tspan x="147.00 155.00 163.00 171.00 179.00 187.00 195.00 203.00 211.00 219.00 227.00">z  1.4211 k</tspan><tspan x="235.70" font-size="11.5">Ω</tspan><tspan x="243.00 251.00 259.00 267.00 275.00 283.00 291.00 299.00 307.00 315.00"> -4.9126 k</tspan><tspan x="323.70" font-size="11.5">Ω</tspan><tspan x="331.00 339.00 347.00 355.00 363.00 371.00 379.00 387.00 395.00 403.00">  9.169O f</tspan><tspan x="411.70" font-size="11.5">F</tspan></text>
<path d="M16.5,673.5 L9.5,680.5 L23.5,680.5 Z" fill="none" stroke="#ff00ff" stroke-width="1" shape-rendering="crispEdges"/>
<path d="M24.5,673.5 L17.5,680.5 L31.5,680.5 Z" fill="none" stroke="#ff00ff" stroke-width="1" shape-rendering="crispEdges"/>
<path d="M34.5,673.5 L27.5,680.5 L41.5,680.5 Z" fill="none" stroke="#ff00ff" stroke-width="1" shape-rendering="crispEdges"/>
<path d="M66.5,673.5 L59.5,680.5 L73.5,680.5 Z" fill="none" stroke="#ff00ff" stroke-width="1" shape-rendering="crispEdges"/>
<path d="M118.5,673.5 L111.5,680.5 L125.5,680.5 Z" fill="none" stroke="#ff00ff" stroke-width="1" shape-rendering="crispEdges"/>
<path d="M222.5,673.5 L215.5,680.5 L229.5,680.5 Z" fill="none" stroke="#ff00ff" stroke-width="1" shape-rendering="crispEdges"/>
<path d="M431.5,673.5 L424.5,680.5 L438.5,680.5 Z" fill="none" stroke="#ff00ff" stroke-width="1" shape-rendering="crispEdges"/>
<path d="M203.5,673.5 L196.5,680.5 L210.5,680.5 Z" fill="#ff00ff" stroke="#ff00ff" stroke-width="1" shape-rendering="crispEdges"/>
<text y="376" fill="#00ff00" font-size="13"><tspan x="454.00 462.00 470.00 478.00 486.00 494.00 502.00 510.00 518.00 526.00 534.00 542.00 550.00 558.00 566.00 574.00 582.00 590.00 598.00 606.00 614.00">Tr4 Ls Lin Mag 1OO.Om</tspan><tspan x="622.70" font-size="11.5">U</tspan><tspan x="630.00 638.00 646.00 654.00 662.00 670.00 678.00 686.00 694.00 702.00 710.00">/ Ref O.OOO</tspan><tspan x="718.70" font-size="11.5">U</tspan><tspan x="726.00 734.00 742.00 750.00 758.00 766.00 774.00 782.00 790.00"> [F2 Equ]</tspan></text>
<line x1="552.5" y1="390" x2="552.5" y2="672" stroke="#383838" stroke-width="1"/>
<line x1="587.5" y1="390" x2="587.5" y2="672" stroke="#383838" stroke-width="1"/>
<line x1="622.5" y1="390" x2="622.5" y2="672" stroke="#383838" stroke-width="1"/>
<line x1="657.5" y1="390" x2="657.5" y2="672" stroke="#383838" stroke-width="1"/>
<line x1="693.5" y1="390" x2="693.5" y2="672" stroke="#383838" stroke-width="1"/>
<line x1="728.5" y1="390" x2="728.5" y2="672" stroke="#383838" stroke-width="1"/>
<line x1="763.5" y1="390" x2="763.5" y2="672" stroke="#383838" stroke-width="1"/>
<line x1="798.5" y1="390" x2="798.5" y2="672" stroke="#383838" stroke-width="1"/>
<line x1="833.5" y1="390" x2="833.5" y2="672" stroke="#383838" stroke-width="1"/>
<line x1="517" y1="418.5" x2="869" y2="418.5" stroke="#383838" stroke-width="1"/>
<line x1="517" y1="446.5" x2="869" y2="446.5" stroke="#383838" stroke-width="1"/>
<line x1="517" y1="474.5" x2="869" y2="474.5" stroke="#383838" stroke-width="1"/>
<line x1="517" y1="502.5" x2="869" y2="502.5" stroke="#383838" stroke-width="1"/>
<line x1="517" y1="531.5" x2="869" y2="531.5" stroke="#383838" stroke-width="1"/>
<line x1="517" y1="559.5" x2="869" y2="559.5" stroke="#383838" stroke-width="1"/>
<line x1="517" y1="587.5" x2="869" y2="587.5" stroke="#383838" stroke-width="1"/>
<line x1="517" y1="615.5" x2="869" y2="615.5" stroke="#383838" stroke-width="1"/>
<line x1="517" y1="643.5" x2="869" y2="643.5" stroke="#383838" stroke-width="1"/>
<rect x="517.5" y="390.5" width="352" height="282" fill="none" stroke="#a0a0a0" stroke-width="1"/>
<text x="506.5" y="394.2" fill="#b0b0b0" font-size="13" letter-spacing="0.2" text-anchor="end">1.OOO</text>
<text x="506.5" y="422.4" fill="#b0b0b0" font-size="13" letter-spacing="0.2" text-anchor="end">9OO.Om</text>
<text x="506.5" y="450.6" fill="#b0b0b0" font-size="13" letter-spacing="0.2" text-anchor="end">8OO.Om</text>
<text x="506.5" y="478.8" fill="#b0b0b0" font-size="13" letter-spacing="0.2" text-anchor="end">7OO.Om</text>
<text x="506.5" y="507.0" fill="#b0b0b0" font-size="13" letter-spacing="0.2" text-anchor="end">6OO.Om</text>
<text x="506.5" y="535.2" fill="#b0b0b0" font-size="13" letter-spacing="0.2" text-anchor="end">5OO.Om</text>
<text x="506.5" y="563.4" fill="#b0b0b0" font-size="13" letter-spacing="0.2" text-anchor="end">4OO.Om</text>
<text x="506.5" y="591.6" fill="#b0b0b0" font-size="13" letter-spacing="0.2" text-anchor="end">3OO.Om</text>
<text x="506.5" y="619.8" fill="#b0b0b0" font-size="13" letter-spacing="0.2" text-anchor="end">2OO.Om</text>
<text x="506.5" y="648.0" fill="#b0b0b0" font-size="13" letter-spacing="0.2" text-anchor="end">1OO.Om</text>
<text x="506.5" y="676.2" fill="#00ff00" font-size="13" letter-spacing="0.2" text-anchor="end">O.OOO</text>
<text y="402" fill="#00ff00" font-size="13"><tspan x="520.00 528.00 536.00 544.00 552.00 560.00 568.00 576.00 584.00 592.00 600.00 608.00 616.00 624.00"> 1  1OO.OOOOO </tspan><tspan x="632.70 640.70" font-size="11.5">MH</tspan><tspan x="648.00 656.00 664.00 672.00 680.00 688.00 696.00 704.00 712.00 720.00 728.00">z  4.O162 n</tspan><tspan x="736.70" font-size="11.5">U</tspan></text>
<text y="415" fill="#00ff00" font-size="13"><tspan x="520.00 528.00 536.00 544.00 552.00 560.00 568.00 576.00 584.00 592.00 600.00 608.00 616.00 624.00"> 2  5OO.OOOOO </tspan><tspan x="632.70 640.70" font-size="11.5">MH</tspan><tspan x="648.00 656.00 664.00 672.00 680.00 688.00 696.00 704.00 712.00 720.00 728.00">z  3.7432 n</tspan><tspan x="736.70" font-size="11.5">U</tspan></text>
<text y="428" fill="#00ff00" font-size="13"><tspan x="520.00 528.00 536.00 544.00 552.00 560.00 568.00 576.00 584.00 592.00 600.00 608.00 616.00 624.00"> 3  1.OOOOOOO </tspan><tspan x="632.70 640.70" font-size="11.5">GH</tspan><tspan x="648.00 656.00 664.00 672.00 680.00 688.00 696.00 704.00 712.00 720.00 728.00">z  3.7398 n</tspan><tspan x="736.70" font-size="11.5">U</tspan></text>
<text y="441" fill="#00ff00" font-size="13"><tspan x="520.00 528.00 536.00 544.00 552.00 560.00 568.00 576.00 584.00 592.00 600.00 608.00 616.00 624.00"> 4  2.5OOOOOO </tspan><tspan x="632.70 640.70" font-size="11.5">GH</tspan><tspan x="648.00 656.00 664.00 672.00 680.00 688.00 696.00 704.00 712.00 720.00 728.00">z  4.O431 n</tspan><tspan x="736.70" font-size="11.5">U</tspan></text>
<text y="454" fill="#00ff00" font-size="13"><tspan x="520.00 528.00 536.00 544.00 552.00 560.00 568.00 576.00 584.00 592.00 600.00 608.00 616.00 624.00"> 5  5.OOOOOOO </tspan><tspan x="632.70 640.70" font-size="11.5">GH</tspan><tspan x="648.00 656.00 664.00 672.00 680.00 688.00 696.00 704.00 712.00 720.00 728.00">z  5.2364 n</tspan><tspan x="736.70" font-size="11.5">U</tspan></text>
<text y="467" fill="#00ff00" font-size="13"><tspan x="520.00 528.00 536.00 544.00 552.00 560.00 568.00 576.00 584.00 592.00 600.00 608.00 616.00 624.00"> 6  1O.OOOOOO </tspan><tspan x="632.70 640.70" font-size="11.5">GH</tspan><tspan x="648.00 656.00 664.00 672.00 680.00 688.00 696.00 704.00 712.00 720.00 728.00">z  15.344 n</tspan><tspan x="736.70" font-size="11.5">U</tspan></text>
<text y="480" fill="#00ff00" font-size="13"><tspan x="520.00 528.00 536.00 544.00 552.00 560.00 568.00 576.00 584.00 592.00 600.00 608.00 616.00 624.00"> 7  2O.OOOOOO </tspan><tspan x="632.70 640.70" font-size="11.5">GH</tspan><tspan x="648.00 656.00 664.00 672.00 680.00 688.00 696.00 704.00 712.00 720.00 728.00">z  636.88 p</tspan><tspan x="736.70" font-size="11.5">U</tspan></text>
<text y="493" fill="#00ff00" font-size="13"><tspan x="520.00 528.00 536.00 544.00 552.00 560.00 568.00 576.00 584.00 592.00 600.00 608.00 616.00 624.00">&gt;8  9.O75793O </tspan><tspan x="632.70 640.70" font-size="11.5">GH</tspan><tspan x="648.00 656.00 664.00 672.00 680.00 688.00 696.00 704.00 712.00 720.00 728.00">z  14.174 n</tspan><tspan x="736.70" font-size="11.5">U</tspan></text>
<polyline points="517.5,672.5 869.5,672.5" fill="none" stroke="#00ff00" stroke-width="1" shape-rendering="crispEdges"/>
<path d="M517.5,672.5 L513.5,685.0 L521.5,685.0 Z" fill="none" stroke="#00ff00" stroke-width="1" shape-rendering="crispEdges"/>
<text x="517.5" y="696.0" fill="#00ff00" font-size="13" letter-spacing="0" text-anchor="middle"></text>
<path d="M524.5,672.5 L520.5,685.0 L528.5,685.0 Z" fill="none" stroke="#00ff00" stroke-width="1" shape-rendering="crispEdges"/>
<text x="524.5" y="696.0" fill="#00ff00" font-size="13" letter-spacing="0" text-anchor="middle"></text>
<path d="M533.5,672.5 L529.5,685.0 L537.5,685.0 Z" fill="none" stroke="#00ff00" stroke-width="1" shape-rendering="crispEdges"/>
<text x="533.5" y="696.0" fill="#00ff00" font-size="13" letter-spacing="0" text-anchor="middle"></text>
<path d="M560.5,672.5 L556.5,685.0 L564.5,685.0 Z" fill="none" stroke="#00ff00" stroke-width="1" shape-rendering="crispEdges"/>
<text x="560.5" y="696.0" fill="#00ff00" font-size="13" letter-spacing="0" text-anchor="middle"></text>
<path d="M604.5,672.5 L600.5,685.0 L608.5,685.0 Z" fill="none" stroke="#00ff00" stroke-width="1" shape-rendering="crispEdges"/>
<text x="604.5" y="696.0" fill="#00ff00" font-size="13" letter-spacing="0" text-anchor="middle"></text>
<path d="M692.5,672.5 L688.5,685.0 L696.5,685.0 Z" fill="none" stroke="#00ff00" stroke-width="1" shape-rendering="crispEdges"/>
<text x="692.5" y="696.0" fill="#00ff00" font-size="13" letter-spacing="0" text-anchor="middle"></text>
<path d="M869.5,672.5 L865.5,685.0 L873.5,685.0 Z" fill="none" stroke="#00ff00" stroke-width="1" shape-rendering="crispEdges"/>
<text x="869.5" y="696.0" fill="#00ff00" font-size="13" letter-spacing="0" text-anchor="middle"></text>
<path d="M676.5,672.0 L672.5,659.5 L680.5,659.5 Z" fill="none" stroke="#00ff00" stroke-width="1" shape-rendering="crispEdges"/>
<text x="676.5" y="656.5" fill="#00ff00" font-size="13" letter-spacing="0" text-anchor="middle">8</text>
<path d="M509.5,665 L517.5,672.5 L509.5,680 Z" fill="#00ff00"/>
<path d="M877.5,665 L869.5,672.5 L877.5,680 Z" fill="#00ff00"/>
<path d="M517.5,673.5 L510.5,680.5 L524.5,680.5 Z" fill="none" stroke="#00ff00" stroke-width="1" shape-rendering="crispEdges"/>
<path d="M524.5,673.5 L517.5,680.5 L531.5,680.5 Z" fill="none" stroke="#00ff00" stroke-width="1" shape-rendering="crispEdges"/>
<path d="M533.5,673.5 L526.5,680.5 L540.5,680.5 Z" fill="none" stroke="#00ff00" stroke-width="1" shape-rendering="crispEdges"/>
<path d="M560.5,673.5 L553.5,680.5 L567.5,680.5 Z" fill="none" stroke="#00ff00" stroke-width="1" shape-rendering="crispEdges"/>
<path d="M604.5,673.5 L597.5,680.5 L611.5,680.5 Z" fill="none" stroke="#00ff00" stroke-width="1" shape-rendering="crispEdges"/>
<path d="M692.5,673.5 L685.5,680.5 L699.5,680.5 Z" fill="none" stroke="#00ff00" stroke-width="1" shape-rendering="crispEdges"/>
<path d="M869.5,673.5 L862.5,680.5 L876.5,680.5 Z" fill="none" stroke="#00ff00" stroke-width="1" shape-rendering="crispEdges"/>
<path d="M676.5,673.5 L669.5,680.5 L683.5,680.5 Z" fill="#00ff00" stroke="#00ff00" stroke-width="1" shape-rendering="crispEdges"/>
</svg>
<!-- status bar -->
<div class="abs" style="left:0;top:684px;width:884px;height:2px;background:#e4e4e4"></div>
<div class="abs" style="left:0;top:686px;width:884px;height:17px;background:#b4b4b4"></div>
<div class="abs" style="left:881px;top:684px;width:3px;height:19px;background:#e4e4e4"></div>
<div class="abs" style="left:2px;top:686px;width:16px;height:16px;background:#d0d0d0;border-top:1px solid #f4f4f4;border-left:1px solid #f4f4f4;border-bottom:1px solid #a0a0a0;border-right:1px solid #a0a0a0"></div>
<div class="t" style="left:6px;top:689px;font-size:12px;color:#000">1</div>
<div class="t" style="left:21px;top:689px;font-size:12px;letter-spacing:0.05px;color:#000">Start 50 MHz</div>
<div class="t" style="left:372px;top:689px;font-size:12px;letter-spacing:-0.05px;color:#000">IFBW 70 kHz</div>
<div class="t" style="left:722px;top:689px;font-size:12px;color:#000">Stop 20 GHz</div>
<div class="abs" style="left:797px;top:686px;width:45px;height:15px;background:#3c3c8a;border-top:1px solid #d8d8d8;border-left:1px solid #d8d8d8"></div>
<div class="t" style="left:797px;top:689px;width:45px;text-align:center;font-size:12.5px;letter-spacing:0.4px;color:#fff">16/16</div>
<div class="abs" style="left:844px;top:686px;width:25px;height:15px;background:#3c3c8a;border-top:1px solid #d8d8d8;border-left:1px solid #d8d8d8"></div>
<div class="t" style="left:844px;top:689px;width:26px;text-align:center;font-size:12.5px;color:#fff">Cor</div>
<div class="abs" style="left:871px;top:686px;width:10px;height:15px;background:#d0d0d0;border-top:1px solid #f4f4f4;border-left:1px solid #f4f4f4"></div>
<!-- bottom bar -->
<div class="abs" style="left:0;top:703px;width:1024px;height:2px;background:#1c1c1c"></div>
<div class="abs" style="left:0;top:705px;width:1024px;height:20px;background:#505050"></div>
<div class="abs" style="left:0;top:725px;width:1024px;height:3px;background:#1c1c1c"></div>
<div class="abs" style="left:704px;top:707px;width:47px;height:17px;background:#3c3c8a;border-top:1px solid #262626;border-left:1px solid #262626;border-bottom:1px solid #7a7a7a;border-right:1px solid #7a7a7a"></div>
<div class="t" style="left:704px;top:708px;width:47px;text-align:center;font-size:16.5px;letter-spacing:0px;color:#ffffff">Hold</div>
<div class="abs" style="left:753px;top:707px;width:39px;height:17px;background:#484848;border-top:1px solid #262626;border-left:1px solid #262626;border-bottom:1px solid #7a7a7a;border-right:1px solid #7a7a7a"></div>
<div class="t" style="left:753px;top:708px;width:39px;text-align:center;font-size:16.5px;letter-spacing:-0.4px;color:#8c8c8c">Stop</div>
<div class="abs" style="left:794px;top:707px;width:52px;height:17px;background:#484848;border-top:1px solid #262626;border-left:1px solid #262626;border-bottom:1px solid #7a7a7a;border-right:1px solid #7a7a7a"></div>
<div class="t" style="left:794px;top:708px;width:52px;text-align:center;font-size:16.5px;letter-spacing:-0.5px;color:#8c8c8c">ExtRef</div>
<div class="abs" style="left:848px;top:707px;width:31px;height:17px;background:#484848;border-top:1px solid #262626;border-left:1px solid #262626;border-bottom:1px solid #7a7a7a;border-right:1px solid #7a7a7a"></div>
<div class="t" style="left:848px;top:708px;width:31px;text-align:center;font-size:16.5px;letter-spacing:-0.3px;color:#8c8c8c">Svc</div>
<div class="abs" style="left:881px;top:707px;width:139px;height:17px;background:#484848;border-top:1px solid #262626;border-left:1px solid #262626;border-bottom:1px solid #7a7a7a;border-right:1px solid #7a7a7a"></div>
<div class="t" style="left:881px;top:708px;width:139px;text-align:center;font-size:16.5px;letter-spacing:0.05px;color:#ffffff">2022-01-13 14:23</div>
</body></html>
